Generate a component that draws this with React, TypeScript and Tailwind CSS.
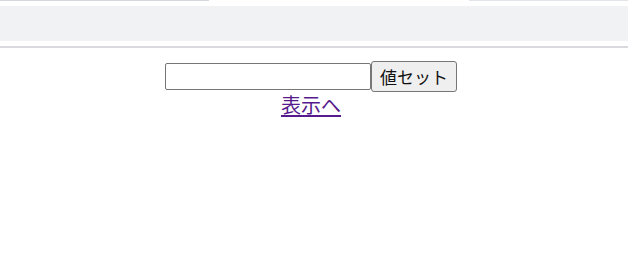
export default function App() {
  return (
    <div className="w-[628px] h-[254px] bg-white overflow-hidden" style={{ fontFamily: '"Noto Sans CJK JP", "Noto Sans", sans-serif' }}>
      <div className="flex h-px">
        <div className="w-[209px] bg-[#d7d8dc]" />
        <div className="flex-1" />
        <div className="w-[159px] bg-[#e3e4e7]" />
      </div>
      <div className="mt-[5px] h-[35px] bg-[#f1f2f4]" />
      <div className="mt-[5px] h-[2px] bg-[#d9d9de]" />

      <div className="w-[622px] flex flex-col items-center mt-[13px]">
        <div className="flex items-center">
          <input
            type="text"
            className="w-[206px] h-[27px] border border-[#767676] rounded-[2px] bg-white px-1 text-[16px] outline-none"
          />
          <button className="h-[31px] w-[86px] border border-[#767676] rounded-[3px] bg-[#efefef] text-[17px] text-[#111] leading-none">
            値セット
          </button>
        </div>
        <a href="#" className="mt-px text-[20px] leading-[24px] text-[#551a8b] underline underline-offset-[2px]">
          表示へ
        </a>
      </div>
    </div>
  );
}
